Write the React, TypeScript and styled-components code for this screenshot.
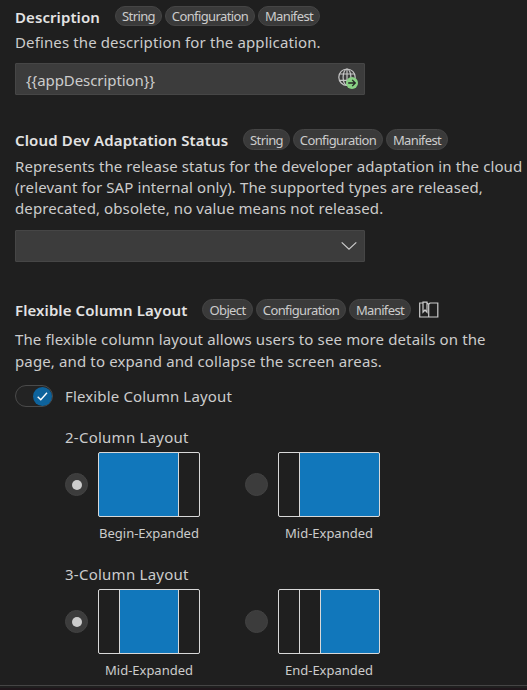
import React from 'react';
import styled, { createGlobalStyle } from 'styled-components';

const GlobalStyle = createGlobalStyle`
  * { box-sizing: border-box; }
  body {
    margin: 0;
    background: #1f1f1f;
    color: #cccccc;
    font-family: "Noto Sans", "Open Sans", sans-serif;
    overflow: hidden;
  }
`;

const Page = styled.main`
  display: flex;
  flex-direction: column;
  height: 690px;
  width: 527px;
  background: #1f1f1f;
  border-bottom: 2px solid #1f161b;
  overflow: hidden;
`;

const Section = styled.section<{ $top: number }>`
  display: flex;
  flex-direction: column;
  padding: ${(p) => p.$top}px 0 0 15px;
`;

const Header = styled.header<{ $height: number }>`
  display: flex;
  align-items: flex-start;
  height: ${(p) => p.$height}px;
`;

const Title = styled.h2<{ $width: number; $spacing: number }>`
  flex: none;
  width: ${(p) => p.$width}px;
  margin: 1px 0 0;
  font-size: 15px;
  font-weight: 600;
  line-height: 21px;
  letter-spacing: ${(p) => p.$spacing}px;
  color: #e3e3e3;
  white-space: nowrap;
`;

const Tags = styled.div`
  display: flex;
  gap: 3px;
`;

const Tag = styled.span<{ $width: number; $height: number }>`
  display: flex;
  align-items: center;
  justify-content: center;
  width: ${(p) => p.$width}px;
  height: ${(p) => p.$height}px;
  border: 1px solid #454545;
  border-radius: 11px;
  background: #3a3a3a;
  font-size: 13px;
  line-height: 18px;
  letter-spacing: -0.62px;
  white-space: nowrap;
`;

const Text = styled.p<{ $line: number; $spacing: number }>`
  margin: 0;
  font-size: 15px;
  line-height: ${(p) => p.$line}px;
  letter-spacing: ${(p) => p.$spacing}px;
  white-space: pre;
`;

const Field = styled.div<{ $top: number }>`
  display: flex;
  align-items: center;
  justify-content: space-between;
  width: 350px;
  height: 32px;
  margin-top: ${(p) => p.$top}px;
  padding: 0 6px 0 10px;
  border: 1px solid #464646;
  border-radius: 1px;
  background: #3c3c3c;
`;

const Value = styled.span`
  padding-top: 2px;
  font-size: 15px;
  line-height: 21px;
  letter-spacing: -0.08px;
`;

const BookIcon = styled.svg`
  flex: none;
  margin-left: 8px;
`;

const SwitchRow = styled.div`
  display: flex;
  align-items: center;
  gap: 12px;
  height: 22px;
  margin-top: 13px;
`;

const Switch = styled.span`
  display: flex;
  align-items: center;
  justify-content: flex-end;
  width: 38px;
  height: 22px;
  border: 1px solid #4a4a4a;
  border-radius: 11px;
  background: #232323;
`;

const Knob = styled.span`
  display: flex;
  align-items: center;
  justify-content: center;
  width: 19px;
  height: 19px;
  border-radius: 50%;
  background: #0e639c;
`;

const SwitchLabel = styled.span`
  font-size: 15px;
  line-height: 22px;
  letter-spacing: 0.15px;
`;

const Group = styled.div<{ $top: number }>`
  display: flex;
  flex-direction: column;
  margin: ${(p) => p.$top}px 0 0 50px;
`;

const GroupTitle = styled.h3`
  margin: 0 0 4px;
  font-size: 15px;
  font-weight: 400;
  line-height: 21px;
  letter-spacing: 0.25px;
`;

const Options = styled.div`
  display: grid;
  grid-template-columns: 180px 180px;
`;

const Option = styled.div`
  display: grid;
  grid-template-columns: 23px 102px;
  column-gap: 10px;
  align-items: center;
`;

const Radio = styled.span`
  display: flex;
  align-items: center;
  justify-content: center;
  width: 23px;
  height: 23px;
  border: 1px solid #424242;
  border-radius: 50%;
  background: #3c3c3c;
`;

const Dot = styled.span`
  width: 10px;
  height: 10px;
  border-radius: 50%;
  background: #cccccc;
`;

const Frame = styled.div<{ $columns: string }>`
  display: grid;
  grid-template-columns: ${(p) => p.$columns};
  column-gap: 1px;
  height: 65px;
  border: 1px solid #d8d8d8;
  border-radius: 2px;
  background: #d8d8d8;
  overflow: hidden;
`;

const Pane = styled.span<{ $active: boolean }>`
  background: ${(p) => (p.$active ? '#1177bb' : '#1f1f1f')};
`;

const Caption = styled.span`
  grid-column: 2;
  justify-self: center;
  margin-top: 7px;
  font-size: 13px;
  line-height: 18px;
  letter-spacing: -0.02px;
  white-space: nowrap;
`;

const BottomRule = styled.div`
  flex: none;
  height: 1px;
  margin: auto 0 2px;
  background: #454545;
`;

const tagWidths: Record<string, number> = {
  String: 47,
  Object: 51,
  Configuration: 90,
  Manifest: 62,
};

function TagList({ names, height }: { names: string[]; height: number }) {
  return (
    <Tags>
      {names.map((name) => (
        <Tag key={name} $width={tagWidths[name]} $height={height}>
          {name}
        </Tag>
      ))}
    </Tags>
  );
}

function GlobeIcon() {
  return (
    <svg width="20" height="22" viewBox="0 0 20 22" fill="none">
      <g stroke="#c5c5c5" strokeWidth="1.2">
        <circle cx="9" cy="9.2" r="8.2" />
        <ellipse cx="9" cy="9.2" rx="3.9" ry="8.2" />
        <path d="M9 1v16.4M1.8 6h14.4M1.8 12.4h14.4" />
      </g>
      <circle cx="14" cy="15" r="6" fill="#89d185" />
      <path d="M10.2 15h7M14.2 11.9l3.1 3.1-3.1 3.1" stroke="#252525" strokeWidth="1.3" />
    </svg>
  );
}

interface LayoutOption {
  caption: string;
  checked: boolean;
  columns: string;
  panes: boolean[];
}

function LayoutGroup({ title, top, options }: { title: string; top: number; options: LayoutOption[] }) {
  return (
    <Group $top={top}>
      <GroupTitle>{title}</GroupTitle>
      <Options>
        {options.map((o) => (
          <Option key={o.caption}>
            <Radio>{o.checked && <Dot />}</Radio>
            <Frame $columns={o.columns}>
              {o.panes.map((active, i) => (
                <Pane key={i} $active={active} />
              ))}
            </Frame>
            <Caption>{o.caption}</Caption>
          </Option>
        ))}
      </Options>
    </Group>
  );
}

export default function App() {
  return (
    <>
      <GlobalStyle />
      <Page>
        <Section $top={6}>
          <Header $height={26}>
            <Title $width={100} $spacing={0.08}>Description</Title>
            <TagList names={['String', 'Configuration', 'Manifest']} height={20} />
          </Header>
          <Text $line={21} $spacing={0.12}>Defines the description for the application.</Text>
          <Field $top={10}>
            <Value>{'{{appDescription}}'}</Value>
            <GlobeIcon />
          </Field>
        </Section>

        <Section $top={34}>
          <Header $height={27}>
            <Title $width={228} $spacing={0.15}>Cloud Dev Adaptation Status</Title>
            <TagList names={['String', 'Configuration', 'Manifest']} height={21} />
          </Header>
          <Text $line={21} $spacing={0.1}>
            {'Represents the release status for the developer adaptation in the cloud\n(relevant for SAP internal only). The supported types are released,\ndeprecated, obsolete, no value means not released.'}
          </Text>
          <Field $top={11}>
            <span />
            <svg width="18" height="12" viewBox="0 0 18 12" fill="none">
              <path d="M1.7 2.4 9 9.2l7.3-6.8" stroke="#cccccc" strokeWidth="1.2" />
            </svg>
          </Field>
        </Section>

        <Section $top={37}>
          <Header $height={29}>
            <Title $width={187} $spacing={0.09}>Flexible Column Layout</Title>
            <TagList names={['Object', 'Configuration', 'Manifest']} height={21} />
            <BookIcon width="20" height="21" viewBox="0 0 20 21" fill="none">
              <path
                d="M4 4H.7v14h18.1V4H11L9.7 5.3V18M4 3.2h4v10L6 11l-2 2.2zM8 4l1.7 1.3"
                stroke="#cccccc"
                strokeWidth="1.2"
              />
            </BookIcon>
          </Header>
          <Text $line={22} $spacing={0.13}>
            {'The flexible column layout allows users to see more details on the\npage, and to expand and collapse the screen areas.'}
          </Text>
          <SwitchRow>
            <Switch>
              <Knob>
                <svg width="13" height="11" viewBox="0 0 13 11" fill="none">
                  <path d="M1.7 5.7 4.8 8.8l6.2-7" stroke="#fff" strokeWidth="1.4" />
                </svg>
              </Knob>
            </Switch>
            <SwitchLabel>Flexible Column Layout</SwitchLabel>
          </SwitchRow>
          <LayoutGroup
            title="2-Column Layout"
            top={20}
            options={[
              { caption: 'Begin-Expanded', checked: true, columns: '79px 20px', panes: [true, false] },
              { caption: 'Mid-Expanded', checked: false, columns: '20px 79px', panes: [false, true] },
            ]}
          />
          <LayoutGroup
            title="3-Column Layout"
            top={22}
            options={[
              { caption: 'Mid-Expanded', checked: true, columns: '20px 58px 20px', panes: [false, true, false] },
              { caption: 'End-Expanded', checked: false, columns: '20px 20px 58px', panes: [false, false, true] },
            ]}
          />
        </Section>
        <BottomRule />
      </Page>
    </>
  );
}
